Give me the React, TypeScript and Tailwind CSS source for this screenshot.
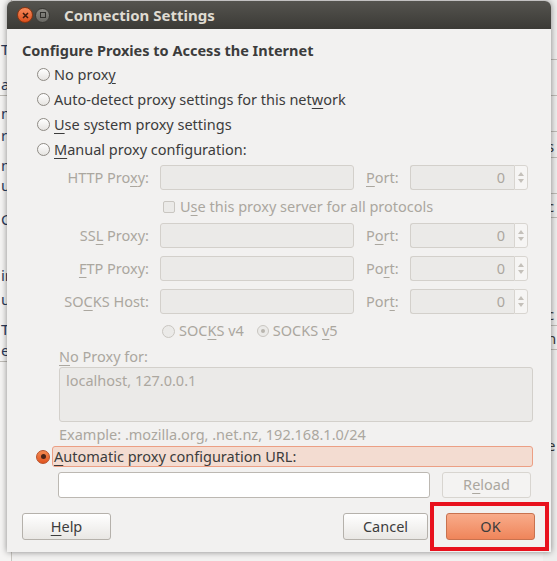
import type { ReactNode } from "react";

const FONT = "font-['Noto_Sans','DejaVu_Sans',sans-serif]";
const DIS = "text-[#aba79f]";

function U({ children }: { children: ReactNode }) {
  return <span className="underline decoration-1 underline-offset-[3px]">{children}</span>;
}

function Radio({ checked = false, disabled = false }: { checked?: boolean; disabled?: boolean }) {
  if (checked) {
    return (
      <span className="flex h-[14px] w-[14px] shrink-0 items-center justify-center rounded-full border border-[#b8512a] bg-gradient-to-b from-[#f5894f] to-[#e0541f]">
        <span className="block h-[5px] w-[5px] rounded-full bg-[#4a2418]" />
      </span>
    );
  }
  return (
    <span
      className={`block h-[13px] w-[13px] shrink-0 rounded-full border ${
        disabled ? "border-[#c9c6c1] bg-[#ebeae8]" : "border-[#8f8b85] bg-gradient-to-b from-white to-[#e6e4e1]"
      }`}
    />
  );
}

function DisabledRadioOn() {
  return (
    <span className="flex h-[12px] w-[12px] shrink-0 items-center justify-center rounded-full border border-[#c9c6c1] bg-[#ebeae8]">
      <span className="block h-[4px] w-[4px] rounded-full bg-[#b9b5ae]" />
    </span>
  );
}

function PortBox() {
  return (
    <div className="flex h-[25px] w-[118px]">
      <div className="flex w-[104px] items-center justify-end rounded-l-[3px] border border-r-0 border-[#d3d0cb] bg-[#ebeae8] pr-[9px] text-[#aba79f]">
        0
      </div>
      <div className="flex w-[14px] flex-col items-center justify-center gap-[3px] rounded-r-[3px] border border-[#d8d5d0] bg-[#f6f5f4]">
        <svg width="6" height="4" viewBox="0 0 6 4">
          <path d="M0 4 L3 0 L6 4 Z" fill="#c4c0ba" />
        </svg>
        <svg width="6" height="4" viewBox="0 0 6 4">
          <path d="M0 0 L3 4 L6 0 Z" fill="#c4c0ba" />
        </svg>
      </div>
    </div>
  );
}

function ProxyRow({ label, port }: { label: ReactNode; port: ReactNode }) {
  return (
    <div className={`flex h-[25px] items-center ${DIS}`}>
      <div className="w-[127px] whitespace-nowrap text-right">{label}</div>
      <div className="ml-[11px] h-[25px] w-[194px] rounded-[3px] border border-[#d3d0cb] bg-[#ebeae8]" />
      <div className="ml-[12px] w-[44px]">{port}</div>
      <PortBox />
    </div>
  );
}

function Backdrop() {
  const left: [number, string, boolean?][] = [
    [38, ""],
    [22, "Ta"],
    [36, "a", true],
    [28, "n"],
    [22, "r"],
    [30, "nc"],
    [20, "u"],
    [34, "C"],
    [56, "ir"],
    [24, "u"],
    [30, "T"],
    [22, "e", true],
  ];
  const right: [number, string, boolean?][] = [
    [60, "", true],
    [36, "", true],
    [36, "", true],
    [26, "s", true],
    [36, "", true],
    [24, "c", true],
    [108, "c", true],
    [24, "n", true],
    [106, "e"],
  ];
  return (
    <div className="flex h-full w-full justify-between bg-[#f2f1f0]">
      <div className="flex w-[12px] flex-col overflow-hidden border-r border-[#c9c6c1] bg-[#f5f4f3] text-[15px] text-[#2b3a5a]">
        {left.map(([h, t, line], i) => (
          <div
            key={i}
            style={{ height: h }}
            className={`flex items-end whitespace-nowrap pl-[1px] ${line ? "border-b border-[#bdbab5]" : ""}`}
          >
            {t}
          </div>
        ))}
      </div>
      <div className="flex w-[14px] flex-col overflow-hidden bg-[#eeedec] pl-[4px] text-[15px] text-[#3c3c3c]">
        {right.map(([h, t, line], i) => (
          <div
            key={i}
            style={{ height: h }}
            className={`flex items-end whitespace-nowrap ${line ? "border-b border-[#bdbab5]" : ""}`}
          >
            {t}
          </div>
        ))}
      </div>
    </div>
  );
}

export default function App() {
  return (
    <div className={`relative h-[561px] w-[557px] overflow-hidden text-[14.5px] text-[#3c3c3c] ${FONT}`}>
      <Backdrop />

      {/* dialog window */}
      <div className="absolute left-[7px] top-[1px] flex h-[551px] w-[544px] flex-col overflow-hidden rounded-t-[6px] bg-[#f2f1f0] shadow-[0_0_6px_rgba(0,0,0,0.45)]">
        <div className="flex h-[28px] shrink-0 items-center bg-gradient-to-b from-[#55544f] to-[#3b3a36] pl-[10px]">
          <span className="flex h-[16px] w-[16px] items-center justify-center rounded-full border border-[#8a3512] bg-gradient-to-b from-[#f68a5a] to-[#dc4f1a]">
            <svg width="7" height="7" viewBox="0 0 7 7">
              <path d="M1 1 L6 6 M6 1 L1 6" stroke="#3a1a0c" strokeWidth="1.5" />
            </svg>
          </span>
          <span className="ml-[2px] flex h-[15px] w-[15px] items-center justify-center rounded-full border border-[#3a3935] bg-gradient-to-b from-[#8b8a85] to-[#6a6964]">
            <span className="block h-[6px] w-[6px] border border-[#2f2e2b]" />
          </span>
          <span className="ml-[14px] text-[15px] font-bold text-[#dfdbd2]">Connection Settings</span>
        </div>

        <div className="flex flex-col pl-[15px] pt-[11px]">
          <div className="h-[20px] whitespace-nowrap font-bold leading-[20px]">Configure Proxies to Access the Internet</div>

          <div className="mt-[2px] flex flex-col">
            {[
              <>No prox<U>y</U></>,
              <>Auto-detect proxy settings for this net<U>w</U>ork</>,
              <><U>U</U>se system proxy settings</>,
              <><U>M</U>anual proxy configuration:</>,
            ].map((t, i) => (
              <div key={i} className="flex h-[25px] items-center">
                <span className="ml-[15px] flex">
                  <Radio />
                </span>
                <span className="ml-[4px] whitespace-nowrap">{t}</span>
              </div>
            ))}
          </div>

          <div className="mt-[3px] flex flex-col">
            <ProxyRow label={<>HTTP Pro<U>x</U>y:</>} port={<><U>P</U>ort:</>} />
            <div className={`flex h-[33px] items-center pl-[141px] ${DIS}`}>
              <span className="block h-[12px] w-[12px] rounded-[2px] border border-[#c9c6c1] bg-[#ebeae8]" />
              <span className="ml-[5px] whitespace-nowrap">
                U<U>s</U>e this proxy server for all protocols
              </span>
            </div>
            <div className="flex flex-col gap-[8px]">
              <ProxyRow label={<>SS<U>L</U> Proxy:</>} port={<>P<U>o</U>rt:</>} />
              <ProxyRow label={<><U>F</U>TP Proxy:</>} port={<>Po<U>r</U>t:</>} />
              <ProxyRow label={<>SO<U>C</U>KS Host:</>} port={<>Por<U>t</U>:</>} />
            </div>
            <div className={`flex h-[34px] items-center pl-[140px] ${DIS}`}>
              <Radio disabled />
              <span className="ml-[4px] whitespace-nowrap">
                SOC<U>K</U>S v4
              </span>
              <span className="ml-[13px] flex">
                <DisabledRadioOn />
              </span>
              <span className="ml-[4px] whitespace-nowrap">
                SOCKS <U>v</U>5
              </span>
            </div>
          </div>

          <div className={`ml-[37px] flex flex-col ${DIS}`}>
            <div className="flex h-[18px] items-center">
              <U>N</U>o Proxy for:
            </div>
            <div className="mt-[1px] h-[55px] w-[474px] rounded-[3px] border border-[#d3d0cb] bg-[#ebeae8] pl-[6px] pt-[2px]">
              localhost, 127.0.0.1
            </div>
            <div className="mt-[3px] flex h-[20px] items-center whitespace-nowrap">
              Example: .mozilla.org, .net.nz, 192.168.1.0/24
            </div>
          </div>

          <div className="mt-[1px] flex h-[21px] items-center">
            <span className="ml-[14px] flex">
              <Radio checked />
            </span>
            <div className="ml-[2px] flex h-[21px] w-[481px] items-center whitespace-nowrap rounded-[3px] border border-[#ec9f84] bg-[#f3dcd1] pl-[1px]">
              <U>A</U>utomatic proxy configuration URL:
            </div>
          </div>

          <div className="ml-[36px] mt-[5px] flex items-center">
            <div className="h-[26px] w-[372px] rounded-[3px] border border-[#bcb8b2] bg-white" />
            <div className={`ml-[12px] flex h-[26px] w-[89px] items-center justify-center rounded-[3px] border border-[#d8d5d0] bg-[#f4f3f2] ${DIS}`}>
              R<U>e</U>load
            </div>
          </div>

          <div className="mt-[15px] flex items-center">
            <button className="h-[27px] w-[89px] rounded-[3px] border border-[#b5b1ab] bg-gradient-to-b from-white to-[#e9e7e4] text-[#3c3c3c]">
              <U>H</U>elp
            </button>
            <button className="ml-[232px] h-[27px] w-[85px] rounded-[3px] border border-[#b5b1ab] bg-gradient-to-b from-white to-[#e9e7e4] text-[#3c3c3c]">
              Cancel
            </button>
            <button className="ml-[18px] h-[27px] w-[89px] rounded-[3px] border border-[#c8724f] bg-gradient-to-b from-[#f8ab8a] to-[#ef855a] text-[#3c3c3c]">
              OK
            </button>
          </div>
        </div>
      </div>

      {/* annotation */}
      <div className="absolute left-[430px] top-[502px] h-[49px] w-[119px] border-[4px] border-[#e8111d]" />
    </div>
  );
}
